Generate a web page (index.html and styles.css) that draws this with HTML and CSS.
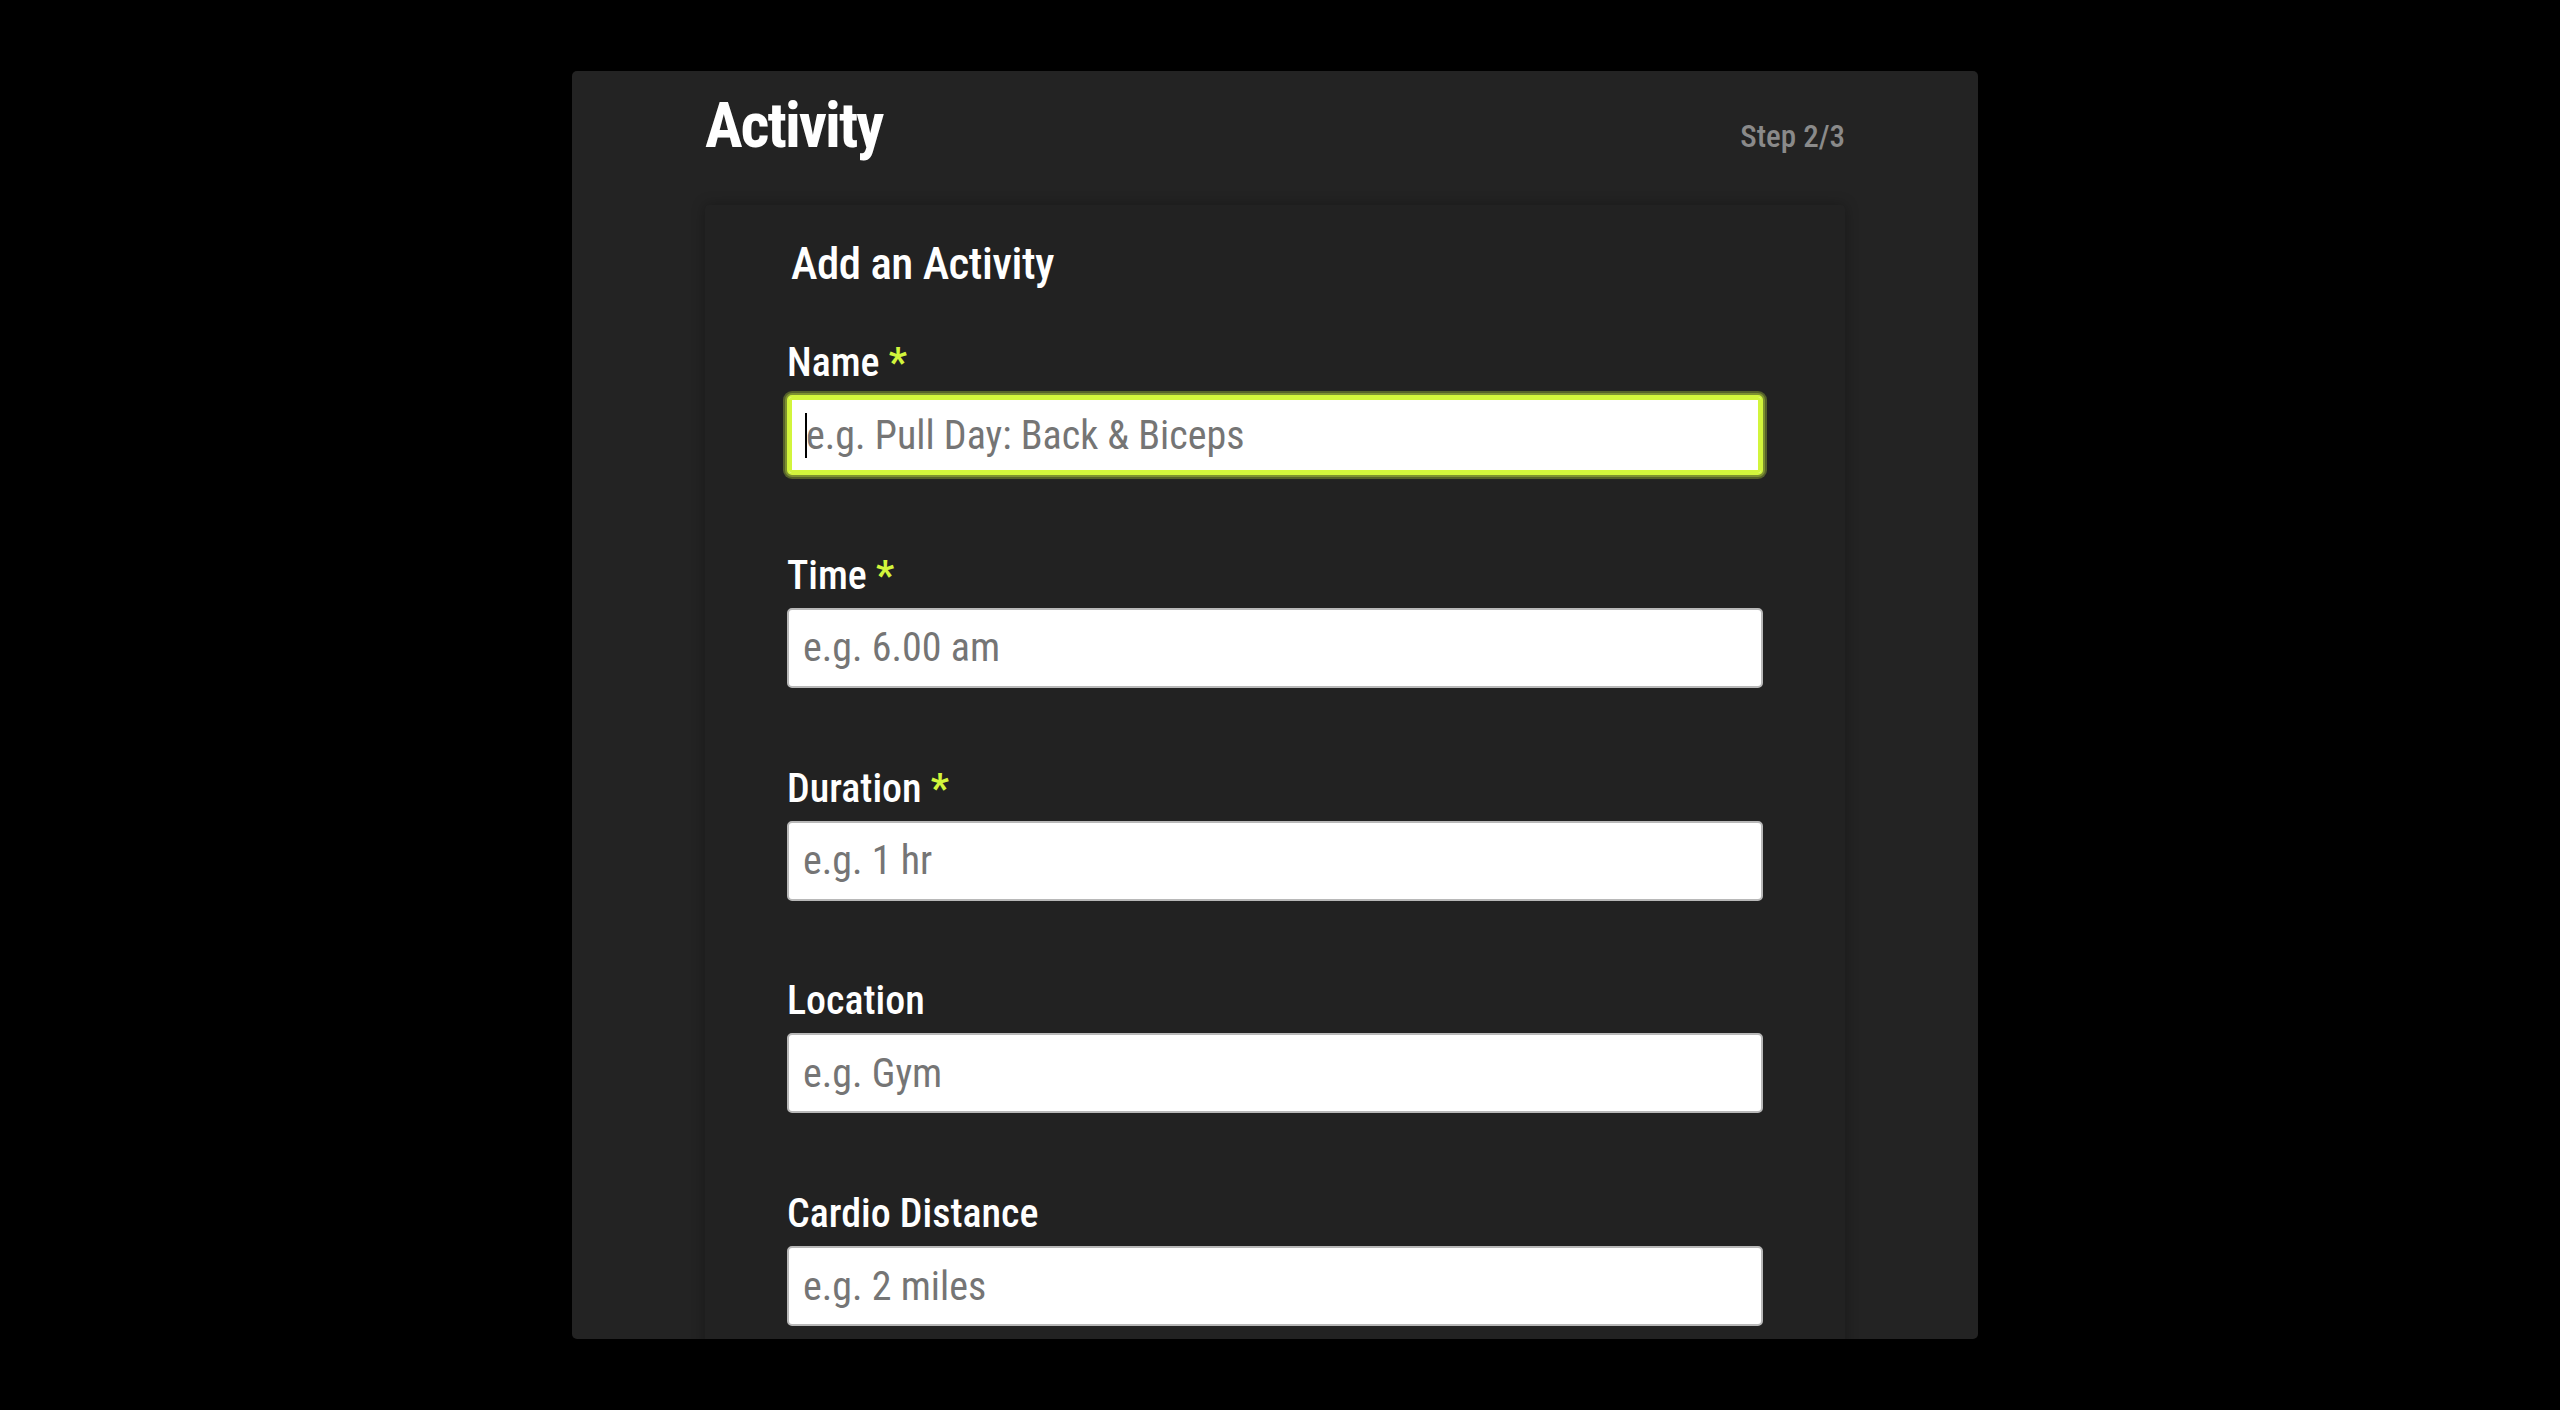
FILE: index.html
```html
<!DOCTYPE html>
<html lang="en">
<head>
<meta charset="utf-8">
<title>Activity</title>
<link rel="stylesheet" href="styles.css">
</head>
<body>
<main class="panel">
  <header class="panel-header">
    <h1 class="panel-title">Activity</h1>
    <span class="panel-step">Step 2/3</span>
  </header>
  <section class="card">
    <h2 class="card-title">Add an Activity</h2>
    <form class="form">
      <div class="field">
        <label class="field-label" for="name">Name <span class="req">*</span></label>
        <div class="input-wrap">
          <input class="field-input is-focused" id="name" type="text" placeholder="e.g. Pull Day: Back &amp; Biceps">
          <span class="caret"></span>
        </div>
      </div>
      <div class="field">
        <label class="field-label" for="time">Time <span class="req">*</span></label>
        <input class="field-input" id="time" type="text" placeholder="e.g. 6.00 am">
      </div>
      <div class="field">
        <label class="field-label" for="duration">Duration <span class="req">*</span></label>
        <input class="field-input" id="duration" type="text" placeholder="e.g. 1 hr">
      </div>
      <div class="field">
        <label class="field-label" for="location">Location</label>
        <input class="field-input" id="location" type="text" placeholder="e.g. Gym">
      </div>
      <div class="field">
        <label class="field-label" for="distance">Cardio Distance</label>
        <input class="field-input" id="distance" type="text" placeholder="e.g. 2 miles">
      </div>
    </form>
  </section>
</main>
</body>
</html>
```
FILE: styles.css
```css
* { box-sizing: border-box; }

html, body {
  margin: 0;
  padding: 0;
  background: #000;
  height: 100%;
  overflow: hidden;
}

body {
  font-family: Roboto, "Noto Sans", "Liberation Sans", sans-serif;
  font-stretch: 87.5%;
  color: #fff;
}

.panel {
  width: 1406px;
  height: 1268px;
  margin: 71px 0 0 572px;
  padding: 17px 133px 0 133px;
  background: #232323;
  border-radius: 5px;
  overflow: hidden;
}

.panel-header {
  display: flex;
  justify-content: space-between;
  align-items: baseline;
  margin-bottom: 41px;
}

.panel-title {
  margin: 0;
  font-size: 63px;
  line-height: 76px;
  font-weight: 700;
  letter-spacing: -2px;
}

.panel-step {
  font-size: 31px;
  font-weight: 500;
  color: #8a8a8a;
}

.card {
  background: #222;
  border-radius: 4px;
  box-shadow: 0 0 14px rgba(0, 0, 0, 0.3);
  padding: 32px 82px 60px 82px;
}

.card-title {
  margin: 0 0 48px 4px;
  font-size: 45px;
  line-height: 54px;
  font-weight: 500;
  letter-spacing: -0.5px;
}

.form {
  display: flex;
  flex-direction: column;
}

.field {
  display: flex;
  flex-direction: column;
  margin-bottom: 76.75px;
}

.field-label {
  font-size: 40px;
  line-height: 48px;
  font-weight: 500;
  margin-bottom: 8px;
}

.req {
  color: #d2f53c;
  font-weight: 700;
}

.input-wrap {
  position: relative;
}

.field-input {
  display: block;
  height: 80px;
  width: 100%;
  padding: 0 16px 0 14px;
  border: 2px solid #b8b8b8;
  border-radius: 5px;
  background: #fff;
  font-family: inherit;
  font-stretch: inherit;
  font-size: 40px;
  color: #222;
  outline: none;
}

.field-input::placeholder {
  color: #757575;
  opacity: 1;
}

.field-input.is-focused {
  padding-left: 17px;
  border-color: #d2f53c;
  box-shadow: inset 0 0 0 3px #d2f53c, 0 0 0 2px #7d9130, 0 0 0 4px #55612a;
}

.caret {
  position: absolute;
  left: 18px;
  top: 18px;
  width: 2px;
  height: 45px;
  background: #000;
}
```
